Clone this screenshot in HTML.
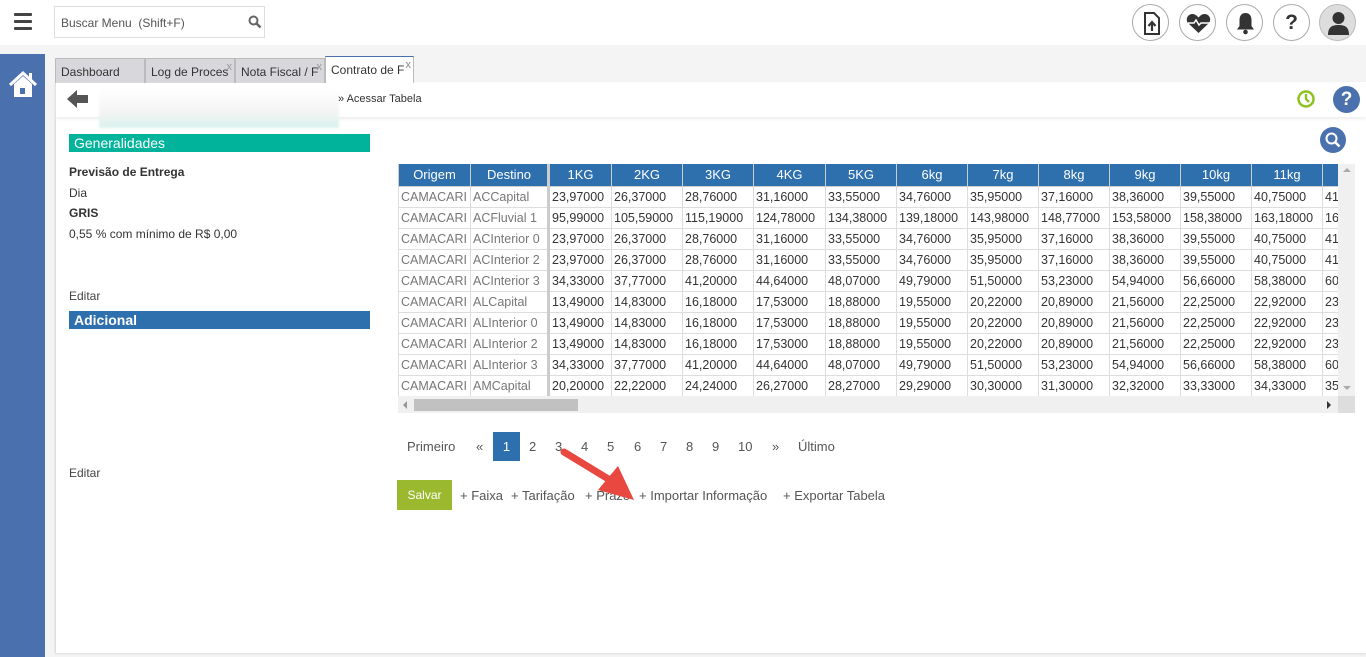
<!DOCTYPE html>
<html><head><meta charset="utf-8">
<style>
*{box-sizing:border-box;margin:0;padding:0}
body{width:1366px;height:657px;overflow:hidden;background:#f4f4f4;font-family:"Liberation Sans",sans-serif;font-size:13px;color:#333;position:relative}
.abs{position:absolute}
.top{left:0;top:0;width:1366px;height:45px;background:#fff}
.ham{left:14px;top:13px;width:18px}
.ham i{display:block;height:3px;background:#444;margin-bottom:4px;border-radius:1px}
.search{left:54px;top:6px;width:211px;height:32px;border:1px solid #ddd;background:#fff}
.search span{position:absolute;left:6px;top:9px;color:#555;font-size:12px}
.ic{top:4px;width:37px;height:37px;border-radius:50%;border:1px solid #aaa;background:#fff}
.side{left:0;top:54px;width:45px;height:603px;background:#4a71ae}
.panel{left:55px;top:82px;width:1311px;height:571px;background:#fff;border-left:1px solid #ddd;box-shadow:0 1px 2px #ddd}
.tab{top:58px;height:25px;background:#d8d8dc;border:1px solid #bbb;border-bottom:none;font-size:12px;color:#333;padding:6px 0 0 5px;overflow:hidden;white-space:nowrap}
.tab b{position:absolute;right:2px;top:2px;font-weight:normal;color:#999;font-size:11px}
.crumb{left:56px;top:83px;width:1310px;height:34px;background:#fff;box-shadow:0 2px 3px #eee}
.gen{left:69px;top:134px;width:301px;height:18px;background:#00b39a;color:#fff;font-size:14px;padding:0 0 0 5px;line-height:18px}
.add{left:69px;top:311px;width:301px;height:18px;background:#2e6fae;color:#fff;font-size:14px;padding:0 0 0 5px;line-height:18px;font-weight:bold}
.lt{left:69px;font-size:12px;color:#333}
.tw{left:398px;top:164px;width:940px;height:232px;overflow:hidden}
table{border-collapse:collapse;table-layout:fixed;width:980px}
th{background:#2e6fae;color:#fff;font-size:13px;height:22px;border:1px solid #ccc;border-top:none;text-align:center;font-weight:normal}
td{height:21px;border:1px solid #ddd;padding:0 2px;font-size:12.5px;color:#333;white-space:nowrap;overflow:hidden}
td.g{color:#777}
td.sd{border-right:3px solid #ccc}
.hs{left:398px;top:396px;width:957px;height:17px;background:#f0f0f0}
.pg{top:439px;font-size:13px;color:#555}
</style></head><body>
<div class="abs top"></div>
<div class="abs ham"><i></i><i></i><i></i></div>
<div class="abs search"><span>Buscar Menu&nbsp; (Shift+F)</span>
<svg class="abs" style="left:193px;top:8px" width="14" height="14" viewBox="0 0 14 14"><circle cx="5.5" cy="5.5" r="4" fill="none" stroke="#666" stroke-width="2"/><path d="M8.5 8.5L12.5 12.5" stroke="#666" stroke-width="2.5"/></svg></div>
<div class="abs ic" style="left:1132px"><svg width="37" height="37" viewBox="0 0 37 37"><path d="M12 8h9l5 5v16H12z" fill="#fff" stroke="#333" stroke-width="2"/><path d="M19 26v-8M15.5 21l3.5-4 3.5 4" stroke="#333" stroke-width="2.2" fill="none"/></svg></div>
<div class="abs ic" style="left:1179px"><svg width="37" height="37" viewBox="0 0 37 37"><path d="M18.5 28L8 18c-3-4 0-9 4.5-9 3 0 4.5 2 6 3.5 1.5-1.5 3-3.5 6-3.5 4.5 0 7.5 5 4.5 9z" fill="#333"/><path d="M8 18h6l2-3 3 5 2-2h9" stroke="#fff" stroke-width="1.5" fill="none"/></svg></div>
<div class="abs ic" style="left:1226px"><svg width="37" height="37" viewBox="0 0 37 37"><path d="M18.5 8c-4 0-6 3-6 7v6l-2.5 3.5h17L24.5 21v-6c0-4-2-7-6-7z" fill="#333"/><circle cx="18.5" cy="27" r="2.3" fill="#333"/></svg></div>
<div class="abs ic" style="left:1273px"><div style="text-align:center;font:bold 21px 'Liberation Sans';color:#333;line-height:35px">?</div></div>
<div class="abs ic" style="left:1319px;background:#ddd;border-color:#bbb"><svg width="37" height="37" viewBox="0 0 37 37"><circle cx="18.5" cy="13" r="6" fill="#333"/><path d="M8 30c0-8 4-10 10.5-10S29 22 29 30z" fill="#333"/></svg></div>
<div class="abs side"><svg class="abs" style="left:8px;top:16px" width="30" height="30" viewBox="0 0 30 30"><path d="M2 15L15 3l13 12" stroke="#fff" stroke-width="3" fill="none"/><rect x="21" y="3" width="3" height="7" fill="#fff"/><path d="M6 14v13h18V14L15 6z" fill="#fff"/><rect x="12" y="18" width="5" height="6" fill="#4a71ae"/></svg></div>
<div class="abs panel"></div>
<div class="abs tab" style="left:55px;width:90px">Dashboard</div>
<div class="abs tab" style="left:145px;width:90px">Log de Proces<b>x</b></div>
<div class="abs tab" style="left:235px;width:90px">Nota Fiscal / F<b>x</b></div>
<div class="abs tab" style="left:325px;width:89px;top:56px;height:27px;background:#fff;border-top:1px solid #4a71ae">Contrato de F<b style="color:#888">x</b></div>
<div class="abs crumb"></div>
<svg class="abs" style="left:67px;top:89px" width="22" height="20" viewBox="0 0 22 20"><path d="M0 10L10 1v5h11v8H10v5z" fill="#555"/></svg>
<div class="abs" style="left:99px;top:88px;width:240px;height:40px;background:linear-gradient(#fff 0,#f4f4f4 60%,#d8f3ee 100%);filter:blur(1px)"></div>
<div class="abs" style="left:338px;top:93px;font-size:11px;color:#333">» Acessar Tabela</div>
<svg class="abs" style="left:1296px;top:89px" width="20" height="20" viewBox="0 0 20 20"><circle cx="10" cy="10" r="7.5" fill="none" stroke="#8dc21f" stroke-width="2.5"/><path d="M10 5v5l3 3" stroke="#8dc21f" stroke-width="2.3" fill="none"/></svg>
<div class="abs" style="left:1333px;top:86px;width:27px;height:27px;border-radius:50%;background:#4a71ae;color:#fff;text-align:center;font:bold 19px/27px 'Liberation Sans'">?</div>
<div class="abs" style="left:1320px;top:127px;width:26px;height:26px;border-radius:50%;background:#4a71ae"><svg width="26" height="26" viewBox="0 0 26 26"><circle cx="11.5" cy="11.5" r="5" fill="none" stroke="#fff" stroke-width="2"/><path d="M15 15l4.5 4.5" stroke="#fff" stroke-width="2.5"/></svg></div>
<div class="abs gen">Generalidades</div>
<div class="abs lt" style="top:165px;font-weight:bold">Previsão de Entrega</div>
<div class="abs lt" style="top:186px">Dia</div>
<div class="abs lt" style="top:206px;font-weight:bold">GRIS</div>
<div class="abs lt" style="top:227px">0,55 % com mínimo de R$ 0,00</div>
<div class="abs lt" style="top:289px;color:#444">Editar</div>
<div class="abs add">Adicional</div>
<div class="abs lt" style="top:466px;color:#444">Editar</div>
<div class="abs tw"><table>
<colgroup><col style="width:72px"><col style="width:78px"><col style="width:63px"><col style="width:71px"><col style="width:71px"><col style="width:72px"><col style="width:71px"><col style="width:71px"><col style="width:71px"><col style="width:71px"><col style="width:71px"><col style="width:71px"><col style="width:71px"><col style="width:56px"></colgroup>
<tr><th>Origem</th><th style="border-right:3px solid #ccc">Destino</th><th>1KG</th><th>2KG</th><th>3KG</th><th>4KG</th><th>5KG</th><th>6kg</th><th>7kg</th><th>8kg</th><th>9kg</th><th>10kg</th><th>11kg</th><th></th></tr>
<tr><td class="g">CAMACARI</td><td class="g sd">ACCapital</td><td>23,97000</td><td>26,37000</td><td>28,76000</td><td>31,16000</td><td>33,55000</td><td>34,76000</td><td>35,95000</td><td>37,16000</td><td>38,36000</td><td>39,55000</td><td>40,75000</td><td>41</td></tr>
<tr><td class="g">CAMACARI</td><td class="g sd">ACFluvial 1</td><td>95,99000</td><td>105,59000</td><td>115,19000</td><td>124,78000</td><td>134,38000</td><td>139,18000</td><td>143,98000</td><td>148,77000</td><td>153,58000</td><td>158,38000</td><td>163,18000</td><td>16</td></tr>
<tr><td class="g">CAMACARI</td><td class="g sd">ACInterior 0</td><td>23,97000</td><td>26,37000</td><td>28,76000</td><td>31,16000</td><td>33,55000</td><td>34,76000</td><td>35,95000</td><td>37,16000</td><td>38,36000</td><td>39,55000</td><td>40,75000</td><td>41</td></tr>
<tr><td class="g">CAMACARI</td><td class="g sd">ACInterior 2</td><td>23,97000</td><td>26,37000</td><td>28,76000</td><td>31,16000</td><td>33,55000</td><td>34,76000</td><td>35,95000</td><td>37,16000</td><td>38,36000</td><td>39,55000</td><td>40,75000</td><td>41</td></tr>
<tr><td class="g">CAMACARI</td><td class="g sd">ACInterior 3</td><td>34,33000</td><td>37,77000</td><td>41,20000</td><td>44,64000</td><td>48,07000</td><td>49,79000</td><td>51,50000</td><td>53,23000</td><td>54,94000</td><td>56,66000</td><td>58,38000</td><td>60</td></tr>
<tr><td class="g">CAMACARI</td><td class="g sd">ALCapital</td><td>13,49000</td><td>14,83000</td><td>16,18000</td><td>17,53000</td><td>18,88000</td><td>19,55000</td><td>20,22000</td><td>20,89000</td><td>21,56000</td><td>22,25000</td><td>22,92000</td><td>23</td></tr>
<tr><td class="g">CAMACARI</td><td class="g sd">ALInterior 0</td><td>13,49000</td><td>14,83000</td><td>16,18000</td><td>17,53000</td><td>18,88000</td><td>19,55000</td><td>20,22000</td><td>20,89000</td><td>21,56000</td><td>22,25000</td><td>22,92000</td><td>23</td></tr>
<tr><td class="g">CAMACARI</td><td class="g sd">ALInterior 2</td><td>13,49000</td><td>14,83000</td><td>16,18000</td><td>17,53000</td><td>18,88000</td><td>19,55000</td><td>20,22000</td><td>20,89000</td><td>21,56000</td><td>22,25000</td><td>22,92000</td><td>23</td></tr>
<tr><td class="g">CAMACARI</td><td class="g sd">ALInterior 3</td><td>34,33000</td><td>37,77000</td><td>41,20000</td><td>44,64000</td><td>48,07000</td><td>49,79000</td><td>51,50000</td><td>53,23000</td><td>54,94000</td><td>56,66000</td><td>58,38000</td><td>60</td></tr>
<tr><td class="g">CAMACARI</td><td class="g sd">AMCapital</td><td>20,20000</td><td>22,22000</td><td>24,24000</td><td>26,27000</td><td>28,27000</td><td>29,29000</td><td>30,30000</td><td>31,30000</td><td>32,32000</td><td>33,33000</td><td>34,33000</td><td>35</td></tr>
</table></div>
<div class="abs" style="left:1338px;top:164px;width:17px;height:232px;background:#f0f0f0"><div style="margin:4px 0 0 5px;width:0;height:0;border-left:4px solid transparent;border-right:4px solid transparent;border-bottom:4px solid #aaa"></div><div style="position:absolute;bottom:6px;left:5px;width:0;height:0;border-left:4px solid transparent;border-right:4px solid transparent;border-top:4px solid #aaa"></div></div>
<div class="abs hs"><div class="abs" style="left:5px;top:5px;border-top:4px solid transparent;border-bottom:4px solid transparent;border-right:4px solid #999"></div><div class="abs" style="left:16px;top:3px;width:164px;height:12px;background:#c1c1c1"></div><div class="abs" style="left:929px;top:5px;border-top:4px solid transparent;border-bottom:4px solid transparent;border-left:4px solid #333"></div><div class="abs" style="left:940px;top:0;width:17px;height:17px;background:#ddd"></div></div>
<div class="abs pg" style="left:407px">Primeiro</div>
<div class="abs pg" style="left:476px">«</div>
<div class="abs" style="left:493px;top:432px;width:27px;height:29px;background:#2e6fae;color:#fff;text-align:center;line-height:29px;font-size:13px">1</div>
<div class="abs pg" style="left:529px">2</div>
<div class="abs pg" style="left:555px">3</div>
<div class="abs pg" style="left:581px">4</div>
<div class="abs pg" style="left:607px">5</div>
<div class="abs pg" style="left:634px">6</div>
<div class="abs pg" style="left:660px">7</div>
<div class="abs pg" style="left:686px">8</div>
<div class="abs pg" style="left:712px">9</div>
<div class="abs pg" style="left:738px">10</div>
<div class="abs pg" style="left:772px">»</div>
<div class="abs pg" style="left:798px">Último</div>
<div class="abs" style="left:397px;top:480px;width:55px;height:30px;background:#9ab92f;color:#fff;font-size:12px;text-align:center;line-height:30px">Salvar</div>
<div class="abs pg" style="left:460px;top:488px">+ Faixa</div>
<div class="abs pg" style="left:511px;top:488px">+ Tarifação</div>
<div class="abs pg" style="left:585px;top:488px">+ Prazo</div>
<div class="abs pg" style="left:639px;top:488px">+ Importar Informação</div>
<div class="abs pg" style="left:783px;top:488px">+ Exportar Tabela</div>
<svg class="abs" style="left:558px;top:444px" width="80" height="62" viewBox="0 0 80 62"><path d="M6 8L52 36" stroke="#e8483f" stroke-width="7" stroke-linecap="round"/><path d="M40 46L76 56 60 22z" fill="#e8483f"/></svg>
</body></html>
